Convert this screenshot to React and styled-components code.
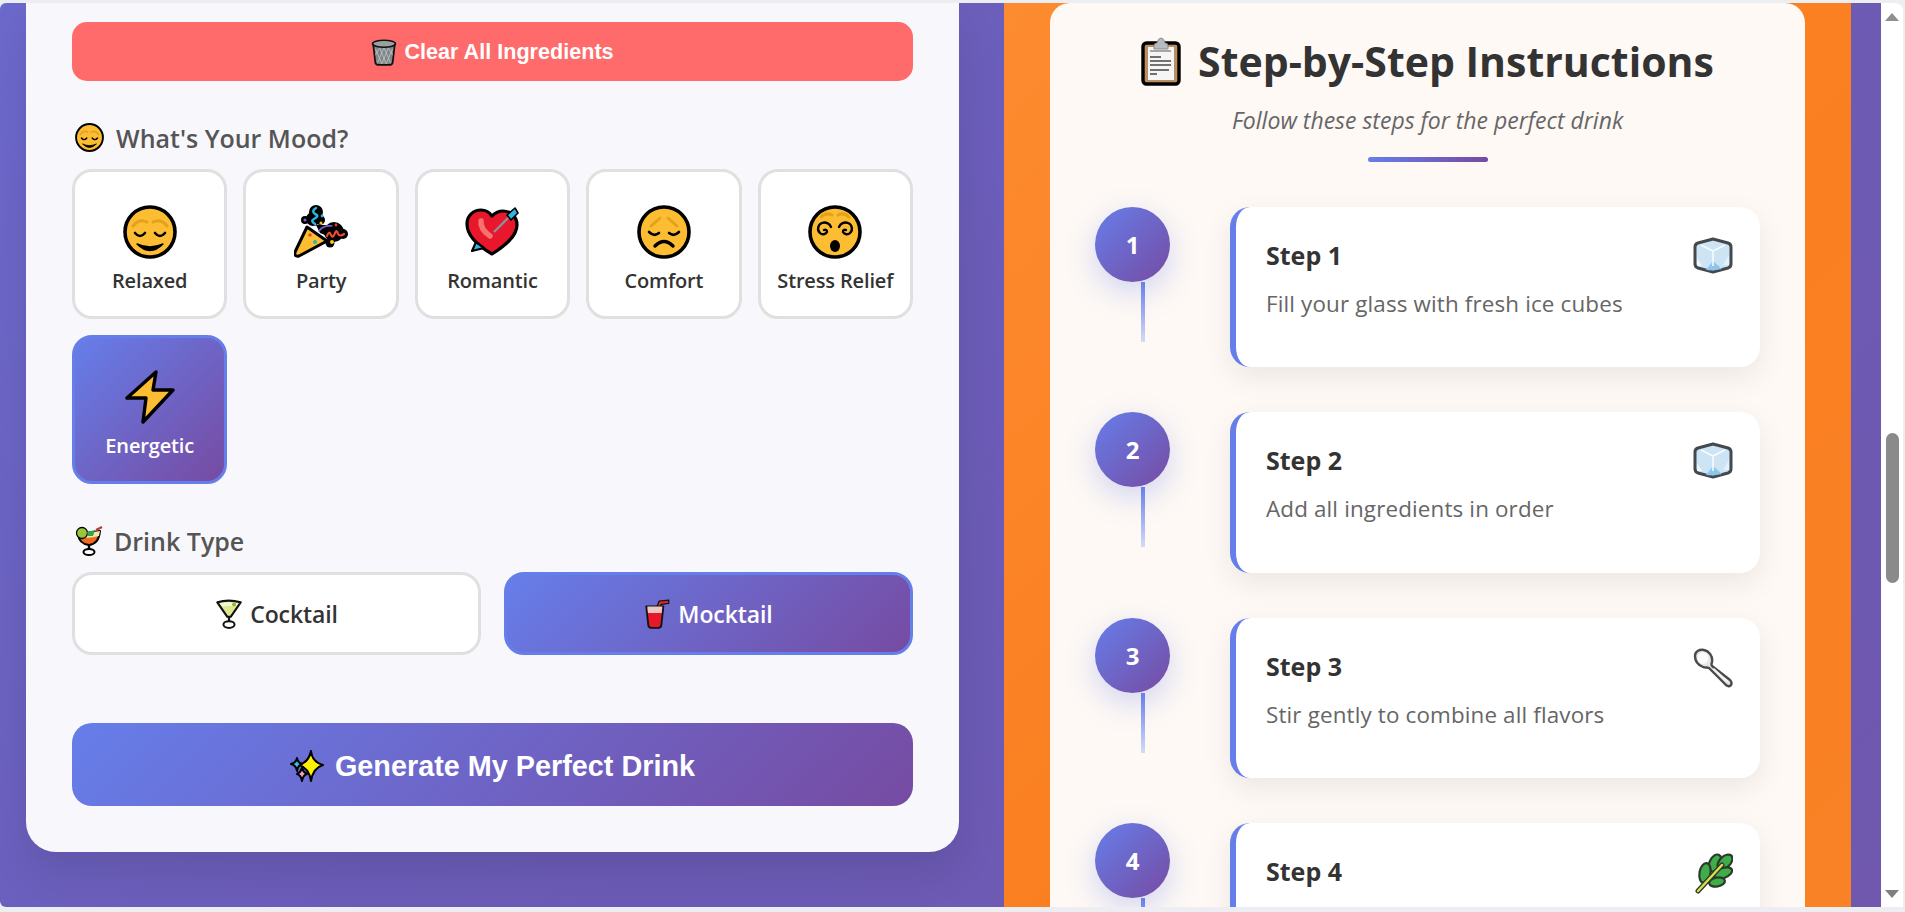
import React from 'react'
import styled, { createGlobalStyle } from 'styled-components'

const GlobalStyle = createGlobalStyle`
  html, body {
    margin: 0;
    height: 100%;
    overflow: hidden;
    background: #eceef1;
  }
  * { box-sizing: border-box; }
`

const Emoji = styled.svg`
  flex: none;
  display: block;
  width: ${(p) => p.$w}px;
  height: ${(p) => p.$h}px;
`

// all the emoji are drawn by hand, the reference uses a system emoji font
const Face = ({ children }) => (
  <Emoji $w={54} $h={54} viewBox="0 0 54 54">
    <circle cx="27" cy="27" r="25" fill="#fcbd33" stroke="#000" strokeWidth="3.6" />
    {children}
  </Emoji>
)

const RelaxedFace = ({ small }) => (
  <Emoji $w={small ? 29 : 54} $h={small ? 29 : 54} viewBox="0 0 54 54">
    <circle cx="27" cy="27" r="25" fill="#fcbd33" stroke="#000" strokeWidth="3.6" />
    <g fill="none" strokeLinecap="round">
      <path d="M10 21 Q16 13 24 17" stroke="#e4a11c" strokeWidth="3" />
      <path d="M30 17 Q38 13 44 21" stroke="#e4a11c" strokeWidth="3" />
      <path d="M12 28 Q17 34 22 28" stroke="#000" strokeWidth="2.6" />
      <path d="M32 28 Q37 34 42 28" stroke="#000" strokeWidth="2.6" />
    </g>
    <path d="M14 39 Q27 45 40 39 Q27 52 14 39Z" fill="#000" stroke="#000" strokeWidth="1.4" strokeLinejoin="round" />
  </Emoji>
)

const PensiveFace = () => (
  <Face>
    <g fill="none" strokeLinecap="round">
      <path d="M14 21 L23 13" stroke="#e4a11c" strokeWidth="3" />
      <path d="M31 13 L40 21" stroke="#e4a11c" strokeWidth="3" />
      <path d="M12 27 Q17 32 22 28" stroke="#000" strokeWidth="2.6" />
      <path d="M32 28 Q37 32 42 27" stroke="#000" strokeWidth="2.6" />
      <path d="M18 41 Q27 32 36 41" stroke="#000" strokeWidth="3.4" />
    </g>
  </Face>
)

const DizzyFace = () => (
  <Face>
    <g fill="none" strokeLinecap="round">
      <path d="M13 12 Q18 7 24 10" stroke="#e4a11c" strokeWidth="3" />
      <path d="M30 10 Q36 7 41 12" stroke="#e4a11c" strokeWidth="3" />
      <path d="M16 25 a2 2 0 0 1 3 2 a4.5 4.5 0 0 1 -7 1 a6 6 0 0 1 2 -10 a7 7 0 0 1 9 4" stroke="#000" strokeWidth="2.4" />
      <path d="M38 25 a2 2 0 0 0 -3 2 a4.5 4.5 0 0 0 7 1 a6 6 0 0 0 -2 -10 a7 7 0 0 0 -9 4" stroke="#000" strokeWidth="2.4" />
    </g>
    <ellipse cx="27" cy="41" rx="5" ry="6" fill="#000" />
  </Face>
)

const PartyPopper = () => (
  <Emoji $w={54} $h={54} viewBox="0 0 54 54">
    <g fill="#000">
      <circle cx="22" cy="7" r="7" />
      <circle cx="19" cy="14" r="7" />
      <circle cx="11" cy="15" r="4" />
      <circle cx="26" cy="15" r="5" />
      <circle cx="40" cy="27" r="10" />
      <circle cx="49" cy="29" r="5" />
      <circle cx="36" cy="38" r="4.5" />
      <path d="M22 20 L38 20 L36 32 L26 28Z" />
    </g>
    <path d="M13 22 L33 36 L5 51 Q0 52 1 47Z" fill="#fcbd33" stroke="#000" strokeWidth="3" strokeLinejoin="round" />
    <circle cx="16" cy="30" r="1.8" fill="#e5502a" />
    <circle cx="21" cy="37" r="2" fill="#2eb5a8" />
    <g fill="none" strokeLinecap="round">
      <path d="M22 3 Q17 6 21 9 Q26 11 20 14 Q16 16 21 19" stroke="#29b6e0" strokeWidth="2.5" />
      <path d="M25 26 Q29 20 38 21" stroke="#7a5fd0" strokeWidth="1.6" />
      <path d="M33 31 Q35 25 37 30 Q39 34 41 28 Q43 24 44 29 Q46 32 50 29" stroke="#f04a30" strokeWidth="2.2" />
    </g>
    <circle cx="11" cy="15" r="1.6" fill="#7a5fd0" />
    <circle cx="27" cy="18" r="1.6" fill="#f5c518" />
    <circle cx="28" cy="11" r="1.4" fill="#29b6e0" />
    <circle cx="38" cy="37" r="2" fill="#f5c518" />
    <circle cx="42" cy="20" r="1.4" fill="#e9412c" />
  </Emoji>
)

const HeartArrow = () => (
  <Emoji $w={54} $h={50} viewBox="0 0 54 50">
    <path d="M27 47 C15 40 2 30 2 17 C2 8 9 3 16 3 C21 3 25 6 27 9 C30 6 34 4 38 4 C46 4 52 10 52 18 C52 30 38 40 27 47Z" fill="#e9172b" stroke="#000" strokeWidth="3.2" strokeLinejoin="round" />
    <path d="M16 14 Q15 22 25 29" fill="none" stroke="#f6726f" strokeWidth="5.5" strokeLinecap="round" />
    <path d="M29 25 L45 9" stroke="#8b8fa0" strokeWidth="2.4" />
    <path d="M42 8 L50 1 L53 6 L46 13Z" fill="#2fb6e6" stroke="#000" strokeWidth="1.6" strokeLinejoin="round" />
    <path d="M7 44 L11 35 L19 41Z" fill="#2fb6e6" stroke="#000" strokeWidth="2.2" strokeLinejoin="round" />
  </Emoji>
)

const Bolt = () => (
  <Emoji $w={50} $h={54} viewBox="0 0 50 54">
    <path d="M31 2 L2 28 L21 28 L18 52 L48 20 L28 20Z" fill="#fcbd33" stroke="#000" strokeWidth="3.4" strokeLinejoin="round" />
  </Emoji>
)

const TrashBin = () => (
  <Emoji $w={26} $h={27} viewBox="0 0 24 25">
    <path d="M2 5 L4 22 Q4.5 24 7 24 L17 24 Q19.5 24 20 22 L22 5Z" fill="#7f8688" stroke="#111" strokeWidth="1.6" strokeLinejoin="round" />
    <g stroke="#c3c8c9" strokeWidth=".7">
      <path d="M4 9 L10 23 M8 8 L14 23 M12 8 L18 22 M16 8 L20 15" />
      <path d="M20 9 L14 23 M16 8 L10 23 M12 8 L6 22 M8 8 L4 15" />
    </g>
    <ellipse cx="12" cy="4.4" rx="10.6" ry="3.2" fill="#9aa0a2" stroke="#111" strokeWidth="1.5" />
  </Emoji>
)

const TropicalDrink = () => (
  <Emoji $w={28} $h={30} viewBox="0 0 28 30">
    <path d="M3 8 Q4 18 14 19 Q24 18 25 5Z" fill="#ee6b1e" stroke="#000" strokeWidth="2" strokeLinejoin="round" />
    <path d="M4 8 L25 5 L24 10 Q14 13 5 11Z" fill="#f1e7b0" />
    <circle cx="7" cy="7" r="5.5" fill="#9bc53d" stroke="#000" strokeWidth="1.3" />
    <path d="M12 6 L20 4 L18 10 L13 10Z" fill="#37a34a" />
    <path d="M21 4 L27 1" stroke="#b5392c" strokeWidth="2" />
    <path d="M14 19 L14 24" stroke="#000" strokeWidth="2.4" />
    <ellipse cx="14" cy="26" rx="5.5" ry="3" fill="#fff" stroke="#000" strokeWidth="2" />
  </Emoji>
)

const CocktailGlass = () => (
  <Emoji $w={28} $h={30} viewBox="0 0 25 27">
    <path d="M2 3 Q12 0 23 3 L14 16 L11 16Z" fill="#dfe88e" stroke="#111" strokeWidth="1.9" strokeLinejoin="round" />
    <path d="M4 4 Q12 2 21 4 L18 7 Q12 5 7 7Z" fill="#f5f6d5" />
    <circle cx="17" cy="5" r="1.8" fill="#8fb339" />
    <path d="M12.5 16 L12.5 21" stroke="#111" strokeWidth="2" />
    <ellipse cx="12.5" cy="23" rx="5" ry="3" fill="#fff" stroke="#111" strokeWidth="1.8" />
  </Emoji>
)

const CupStraw = () => (
  <Emoji $w={27} $h={30} viewBox="0 0 25 28">
    <path d="M12 7 L14 2 L23 1 L23 4 L16 5 L15 8" fill="#e2262f" stroke="#111" strokeWidth="1.2" strokeLinejoin="round" />
    <path d="M2 7 L4 25 Q4.5 27 7 27 L13 27 Q15.5 27 16 25 L18 7Z" fill="#e8182b" stroke="#111" strokeWidth="1.7" strokeLinejoin="round" />
    <path d="M3 7 L17 7 L16.4 13 L3.6 13Z" fill="#e9c9c6" />
  </Emoji>
)

const Sparkles = () => (
  <Emoji $w={34} $h={32} viewBox="0 0 34 32">
    <g stroke="#000" strokeWidth="2" strokeLinejoin="round">
      <path d="M21 1 Q22 12 33 15 Q23 18 21 31 Q19 18 9 15 Q19 12 21 1Z" fill="#fff200" />
      <path d="M7 8 Q8 13 12 14 Q8 15 7 21 Q6 15 1 14 Q6 13 7 8Z" fill="#2fc4e0" />
      <path d="M12 18 Q13 22 17 24 Q13 25 12 31 Q11 25 7 24 Q11 22 12 18Z" fill="#f2a0c6" />
    </g>
  </Emoji>
)

const Clipboard = () => (
  <Emoji $w={40} $h={49} viewBox="0 0 40 49">
    <rect x="2" y="6" width="36" height="41" rx="3.5" fill="#bb8f62" stroke="#000" strokeWidth="3.4" />
    <rect x="7" y="10" width="26" height="33" fill="#f5f5f5" />
    <path d="M13 9 Q13 6 16 6 Q17 1 20 1 Q23 1 24 6 Q27 6 27 9 L27 12 L13 12Z" fill="#b9bcbf" stroke="#8b8b8b" strokeWidth="1" />
    <g stroke="#444" strokeWidth="1.7">
      <path d="M9 14 L30 14" stroke="#8a8a8a" />
      <path d="M9 20 L20 20 M9 24 L30 24 M9 28 L30 28 M9 33 L28 33 M9 37 L16 37" />
    </g>
  </Emoji>
)

const IceCube = () => (
  <Emoji $w={40} $h={37} viewBox="0 0 40 37">
    <path d="M20 2 L35 6 Q38 7 38 10 L38 27 Q38 30 35 31 L20 35 L5 31 Q2 30 2 27 L2 10 Q2 7 5 6Z" fill="#cde4f5" stroke="#44494e" strokeWidth="3" strokeLinejoin="round" />
    <path d="M13 33 L20 24 L29 32 L20 33.5Z" fill="#8cc6ee" />
    <path d="M4 21 L9 29 L4 29Z" fill="#eef8fe" />
    <path d="M36 18 L30 28 L36 28Z" fill="#e2f2fc" />
    <path d="M20 14 L20 29 M20 14 L8 8 M20 14 L32 8" stroke="#f6fcff" strokeWidth="1.6" fill="none" />
  </Emoji>
)

const Spoon = () => (
  <Emoji $w={40} $h={40} viewBox="0 0 40 40">
    <path d="M2 8 C2 3 7 1 11 2 C16 3 20 8 19 14 C18.5 16 18 17 19 18 L37 32 C40 35 38 39 35 38 C33 38 32 36 31 35 L16 20 C14 19 12 20 10 19 C5 17 2 13 2 8Z" fill="#e6e6e6" stroke="#4a4a4a" strokeWidth="2.4" strokeLinejoin="round" />
    <ellipse cx="10" cy="10" rx="5.5" ry="6" fill="#fbfbfb" />
    <path d="M21 21 L34 33" stroke="#fafafa" strokeWidth="1.6" strokeLinecap="round" />
  </Emoji>
)

const Herb = () => (
  <Emoji $w={38} $h={41} viewBox="0 0 38 41">
    <g fill="#3fae49" stroke="#2c3a2e" strokeWidth="2.2">
      <ellipse cx="20" cy="10" rx="5.5" ry="9" transform="rotate(25 20 10)" />
      <ellipse cx="30" cy="9" rx="5.5" ry="9" transform="rotate(45 30 9)" />
      <ellipse cx="10" cy="20" rx="5.5" ry="10" transform="rotate(10 10 20)" />
      <ellipse cx="28" cy="20" rx="5" ry="9.5" transform="rotate(70 28 20)" />
      <ellipse cx="22" cy="29" rx="4.5" ry="8" transform="rotate(80 22 29)" />
    </g>
    <path d="M3 38 Q14 26 27 12" fill="none" stroke="#2c3a2e" strokeWidth="5" strokeLinecap="round" />
    <path d="M3 38 Q14 26 27 12" fill="none" stroke="#d9e04a" strokeWidth="2.4" strokeLinecap="round" />
  </Emoji>
)

const Window = styled.div`
  height: 912px;
  display: flex;
  padding: 3px 2px 5px 0;
`

const Page = styled.div`
  flex: 1;
  min-width: 0;
  display: flex;
  overflow: hidden;
  border-radius: 6px 0 0 6px;
  background: linear-gradient(135deg, #6c69cc 0%, #6b5cb8 45%, #6f58ae 100%);
`

const BuilderColumn = styled.div`
  width: 1004px;
  flex: none;
  padding: 0 45px 55px 26px;
`

const BuilderCard = styled.section`
  height: 100%;
  padding: 19px 46px 0;
  background: #f8f8fc;
  border-radius: 0 0 30px 30px;
  box-shadow: 0 20px 40px rgba(0, 0, 0, 0.1);
`

const ClearButton = styled.button`
  width: 100%;
  height: 59px;
  padding: 1px 0 0;
  display: flex;
  align-items: center;
  justify-content: center;
  gap: 7px;
  border: 0;
  border-radius: 15px;
  background: #ff6b6b;
  color: #fff;
  font: 700 21.6px "Liberation Sans", Arial, sans-serif;
`

const SectionLabel = styled.h3`
  margin: ${(p) => p.$top}px 0 0 3px;
  height: 29px;
  display: flex;
  align-items: center;
  gap: ${(p) => p.$gap}px;
  color: #555;
  font: 600 25px "Open Sans", sans-serif;
`

const MoodGrid = styled.div`
  margin-top: 17px;
  display: grid;
  grid-template-columns: repeat(5, 1fr);
  grid-auto-rows: 149.6px;
  gap: 16px;
`

const MoodCard = styled.button`
  display: flex;
  flex-direction: column;
  align-items: center;
  justify-content: flex-end;
  padding: 0 0 22px;
  border: 3px solid ${(p) => (p.$active ? '#667eea' : '#e0e0e0')};
  border-radius: 20px;
  background: ${(p) => (p.$active ? 'linear-gradient(135deg, #667eea 0%, #764ba2 100%)' : '#fff')};
  color: ${(p) => (p.$active ? '#fff' : '#333')};
  font: 600 20px "Open Sans", sans-serif;
  letter-spacing: -0.15px;
  white-space: nowrap;
`

const MoodIcon = styled.span`
  height: 54px;
  margin-bottom: 8px;
  display: flex;
  align-items: center;
`

const TypeRow = styled.div`
  margin-top: 17px;
  display: grid;
  grid-template-columns: 1fr 1fr;
  gap: 23px;
`

const TypeButton = styled.button`
  height: 83px;
  display: flex;
  align-items: center;
  justify-content: center;
  gap: 7px;
  border: 3px solid ${(p) => (p.$active ? '#667eea' : '#e0e0e0')};
  border-radius: 20px;
  background: ${(p) => (p.$active ? 'linear-gradient(135deg, #667eea 0%, #764ba2 100%)' : '#fff')};
  color: ${(p) => (p.$active ? '#fff' : '#333')};
  font: 600 23px "Open Sans", sans-serif;
  letter-spacing: -0.1px;
`

const GenerateButton = styled.button`
  width: 100%;
  height: 83px;
  margin-top: 68px;
  padding: 3px 0 0;
  display: flex;
  align-items: center;
  justify-content: center;
  gap: 11px;
  border: 0;
  border-radius: 20px;
  background: linear-gradient(135deg, #667eea 0%, #764ba2 100%);
  color: #fff;
  font: 700 28.8px "Liberation Sans", Arial, sans-serif;
`

const RecipeColumn = styled.div`
  flex: 1;
  min-width: 0;
  padding-right: 30px;
`

const OrangeBand = styled.div`
  height: 100%;
  padding: 0 46px;
  background: linear-gradient(135deg, #fd8b2f 0%, #fa7f20 55%, #f98226 100%);
`

const RecipeCard = styled.section`
  height: 100%;
  overflow: hidden;
  padding: 33px 45px 0;
  border-radius: 20px 20px 0 0;
  background: #fef9f5;
`

const RecipeTitle = styled.h2`
  margin: 0;
  height: 50px;
  display: flex;
  align-items: center;
  justify-content: center;
  gap: 17px;
  color: #333;
  font: 700 41px "Open Sans", sans-serif;
`

const Subtitle = styled.p`
  margin: 20px 0 0;
  text-align: center;
  color: #666;
  font: italic 400 23px/28px "Open Sans", sans-serif;
`

const TitleBar = styled.div`
  width: 120px;
  height: 5px;
  margin: 23px auto 44.5px;
  border-radius: 3px;
  background: linear-gradient(90deg, #667eea, #764ba2);
`

const StepList = styled.ol`
  margin: 0;
  padding: 0;
  list-style: none;
  display: flex;
  flex-direction: column;
  gap: 45px;
`

const StepRow = styled.li`
  display: flex;
  gap: 60px;
`

const StepRail = styled.div`
  width: 75px;
  flex: none;
`

const StepNumber = styled.div`
  width: 75px;
  height: 75px;
  display: flex;
  align-items: center;
  justify-content: center;
  border-radius: 50%;
  background: linear-gradient(135deg, #667eea 0%, #764ba2 100%);
  box-shadow: 0 10px 30px rgba(102, 126, 234, 0.3);
  color: #fff;
  font: 700 24px "Open Sans", sans-serif;
`

const StepLine = styled.div`
  width: 4px;
  height: 60px;
  margin-left: 46px;
  background: linear-gradient(180deg, #667eea, #d4daf8);
`

const StepCard = styled.div`
  flex: 1;
  min-height: 160.5px;
  padding: 30px 27px 0 30px;
  border-left: 6px solid #667eea;
  border-radius: 20px;
  background: #fff;
  box-shadow: 0 10px 30px rgba(0, 0, 0, 0.08);
`

const StepHead = styled.div`
  display: flex;
  align-items: flex-start;
  justify-content: space-between;
  height: 40px;
`

const StepName = styled.h4`
  margin: -2px 0 0;
  color: #333;
  font: 700 25px/40px "Open Sans", sans-serif;
`

const StepText = styled.p`
  margin: 11px 0 0;
  color: #666;
  font: 400 22.4px/32px "Open Sans", sans-serif;
  letter-spacing: 0.15px;
`

const ScrollBar = styled.div`
  width: 22px;
  flex: none;
  display: flex;
  flex-direction: column;
  align-items: center;
  padding: 10px 0 9px 0;
  background: #fff;
  border-radius: 0 8px 0 0;
`

const ScrollArrow = styled.div`
  width: 0;
  height: 0;
  border-left: 7px solid transparent;
  border-right: 7px solid transparent;
  ${(p) => (p.$down ? 'border-top: 8px solid #7f7f7f;' : 'border-bottom: 8px solid #8f8f8f;')}
`

const ScrollTrack = styled.div`
  flex: 1;
  padding-top: 412px;
`

const ScrollThumb = styled.div`
  width: 13px;
  height: 150px;
  border-radius: 7px;
  background: #8a8a8a;
`

const moods = [
  { name: 'Relaxed', icon: <RelaxedFace /> },
  { name: 'Party', icon: <PartyPopper /> },
  { name: 'Romantic', icon: <HeartArrow /> },
  { name: 'Comfort', icon: <PensiveFace /> },
  { name: 'Stress Relief', icon: <DizzyFace /> },
  { name: 'Energetic', icon: <Bolt />, active: true },
]

const steps = [
  { id: 1, text: 'Fill your glass with fresh ice cubes', icon: <IceCube /> },
  { id: 2, text: 'Add all ingredients in order', icon: <IceCube /> },
  { id: 3, text: 'Stir gently to combine all flavors', icon: <Spoon /> },
  { id: 4, icon: <Herb /> },
]

const App = () => {
  return (
    <Window>
      <GlobalStyle />
      <Page>
        <BuilderColumn>
          <BuilderCard>
            <ClearButton><TrashBin /> Clear All Ingredients</ClearButton>

            <SectionLabel $top={42} $gap={12}><RelaxedFace small /> What's Your Mood?</SectionLabel>
            <MoodGrid>
              {moods.map((m) => (
                <MoodCard key={m.name} $active={m.active}>
                  <MoodIcon>{m.icon}</MoodIcon>
                  {m.name}
                </MoodCard>
              ))}
            </MoodGrid>

            <SectionLabel $top={42} $gap={11}><TropicalDrink /> Drink Type</SectionLabel>
            <TypeRow>
              <TypeButton><CocktailGlass /> Cocktail</TypeButton>
              <TypeButton $active><CupStraw /> Mocktail</TypeButton>
            </TypeRow>

            <GenerateButton><Sparkles /> Generate My Perfect Drink</GenerateButton>
          </BuilderCard>
        </BuilderColumn>

        <RecipeColumn>
          <OrangeBand>
            <RecipeCard>
              <RecipeTitle><Clipboard /> Step-by-Step Instructions</RecipeTitle>
              <Subtitle>Follow these steps for the perfect drink</Subtitle>
              <TitleBar />
              <StepList>
                {steps.map((s) => (
                  <StepRow key={s.id}>
                    <StepRail>
                      <StepNumber>{s.id}</StepNumber>
                      <StepLine />
                    </StepRail>
                    <StepCard>
                      <StepHead>
                        <StepName>Step {s.id}</StepName>
                        {s.icon}
                      </StepHead>
                      {s.text && <StepText>{s.text}</StepText>}
                    </StepCard>
                  </StepRow>
                ))}
              </StepList>
            </RecipeCard>
          </OrangeBand>
        </RecipeColumn>
      </Page>
      <ScrollBar>
        <ScrollArrow />
        <ScrollTrack><ScrollThumb /></ScrollTrack>
        <ScrollArrow $down />
      </ScrollBar>
    </Window>
  )
}

export default App
